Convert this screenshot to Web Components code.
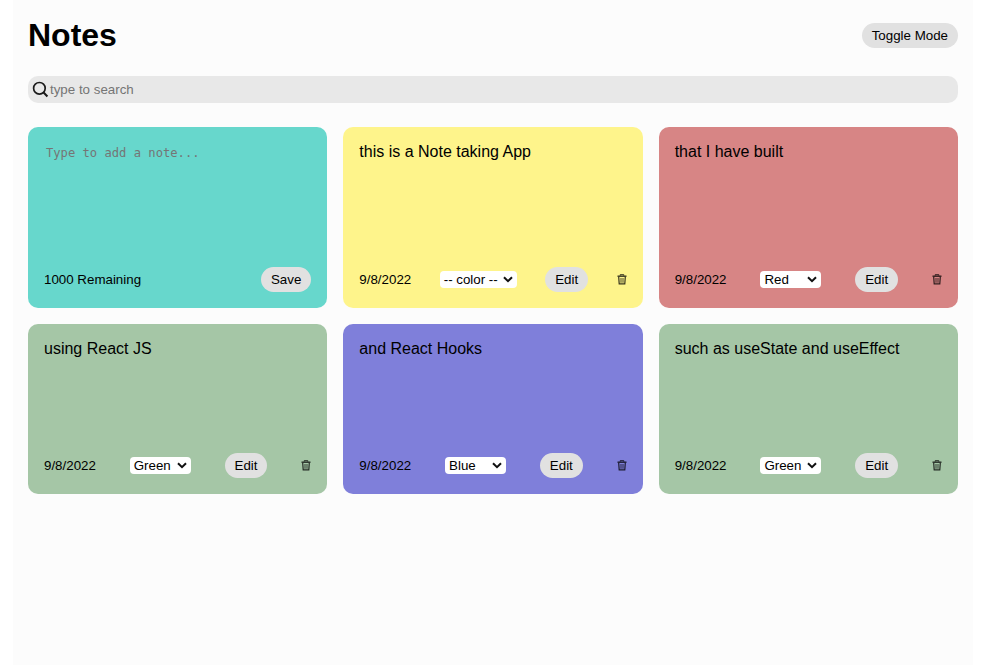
<!DOCTYPE html>
<html lang="en">
<head>
<meta charset="utf-8">
<title>Notes</title>
<style>
body { margin: 0; background: #fff; font-family: "Liberation Sans", Arial, sans-serif; color: #000; }
</style>
</head>
<body>
<notes-app></notes-app>
<script>
const define = (name, html, setup) => {
  const template = document.createElement('template');
  template.innerHTML = html;
  customElements.define(name, class extends HTMLElement {
    constructor() {
      super();
      this.attachShadow({ mode: 'open' }).append(template.content.cloneNode(true));
    }
    connectedCallback() { if (setup) setup(this, this.shadowRoot); }
  });
};

define('pill-button', `
<style>
:host { display: block; flex: none; }
button { display: block; box-sizing: border-box; height: 25px; margin: 0; padding: 0 10px; border: 0; border-radius: 15px; background: #e1e1e1; color: #000; font: 13.333px/25px "Liberation Sans", Arial, sans-serif; white-space: nowrap; }
</style>
<button><slot></slot></button>`);

define('trash-icon', `
<style>
:host { display: block; flex: none; width: 10px; height: 11px; }
svg { display: block; width: 10px; height: 11px; }
</style>
<svg viewBox="0 0 10 11" fill="none" stroke="#000" stroke-opacity=".78">
<path d="M.5 2.2h9" stroke-width="1.4"/><path d="M3.2 1.5V.7h3.6v.8"/>
<path d="M1.7 2.9l.5 7h5.6l.5-7" stroke-width="1.2"/><path d="M4 4v4.8M6 4v4.8" stroke-width=".9"/>
</svg>`);

define('color-select', `
<style>
:host { display: flex; flex: none; box-sizing: border-box; width: 61px; height: 17px; padding: 0 4px; align-items: center; justify-content: space-between; border-radius: 4px; background: #fff; font-size: 13.333px; line-height: 17px; white-space: nowrap; }
:host([wide]) { width: 77px; }
svg { flex: none; width: 10px; height: 7px; }
</style>
<slot></slot><svg viewBox="0 0 10 7" fill="none" stroke="#101010" stroke-width="2"><path d="M1 1.2l4 4 4-4"/></svg>`);

define('search-bar', `
<style>
:host { display: flex; align-items: center; box-sizing: border-box; height: 27px; padding: 0 4px; border-radius: 10px; background: #e8e8e8; color: #757575; font-size: 13.333px; line-height: 15px; }
svg { width: 18px; height: 18px; }
</style>
<svg viewBox="0 0 18 18" fill="none" stroke="#1a1a1a" stroke-width="1.7"><circle cx="7.4" cy="7.3" r="5.8"/><path d="M11.6 11.5l3.8 4" stroke-width="2"/></svg>
<slot></slot>`);

define('note-card', `
<style>
:host { display: flex; flex-direction: column; justify-content: space-between; box-sizing: border-box; min-height: 170px; padding: 16px; border-radius: 10px; background: var(--note-color); }
.text { font-size: 16px; line-height: 18px; white-space: nowrap; }
footer { display: flex; align-items: center; justify-content: space-between; height: 25px; font-size: 13.333px; }
</style>
<div class="text"><slot></slot></div>
<footer><span>9/8/2022</span><color-select></color-select><pill-button>Edit</pill-button><trash-icon></trash-icon></footer>`,
(host, root) => {
  const select = root.querySelector('color-select');
  select.textContent = host.getAttribute('color') || '-- color --';
  select.toggleAttribute('wide', !host.hasAttribute('color'));
});

define('new-note', `
<style>
:host { display: flex; flex-direction: column; justify-content: space-between; box-sizing: border-box; height: 181px; padding: 16px; border-radius: 10px; background: #67d7cc; }
.draft { padding: 2px; color: #757575; font: 12.15px/16px "DejaVu Sans Mono", monospace; white-space: pre; }
footer { display: flex; align-items: center; justify-content: space-between; font-size: 13.333px; }
</style>
<div class="draft"><slot></slot></div>
<footer><span>1000 Remaining</span><pill-button>Save</pill-button></footer>`);

define('notes-app', `
<style>
:host { display: block; box-sizing: border-box; width: 960px; min-height: 665px; margin-left: 13px; padding: 0 15px; background: #fcfcfc; }
header { display: flex; align-items: center; justify-content: space-between; height: 70px; padding-top: 1px; box-sizing: border-box; }
h1 { margin: 0; font-size: 32px; line-height: 37px; }
search-bar { margin: 6px 0 24px; }
main { display: grid; grid-template-columns: repeat(3, 1fr); gap: 16px; }
</style>
<header><h1>Notes</h1><pill-button>Toggle Mode</pill-button></header>
<search-bar>type to search</search-bar>
<main>
<new-note>Type to add a note...</new-note>
<note-card style="--note-color:#fef48b">this is a Note taking App</note-card>
<note-card color="Red" style="--note-color:#d78585">that I have built</note-card>
<note-card color="Green" style="--note-color:#a5c6a6">using React JS</note-card>
<note-card color="Blue" style="--note-color:#7f7fda">and React Hooks</note-card>
<note-card color="Green" style="--note-color:#a5c6a6">such as useState and useEffect</note-card>
</main>`);
</script>
</body>
</html>
